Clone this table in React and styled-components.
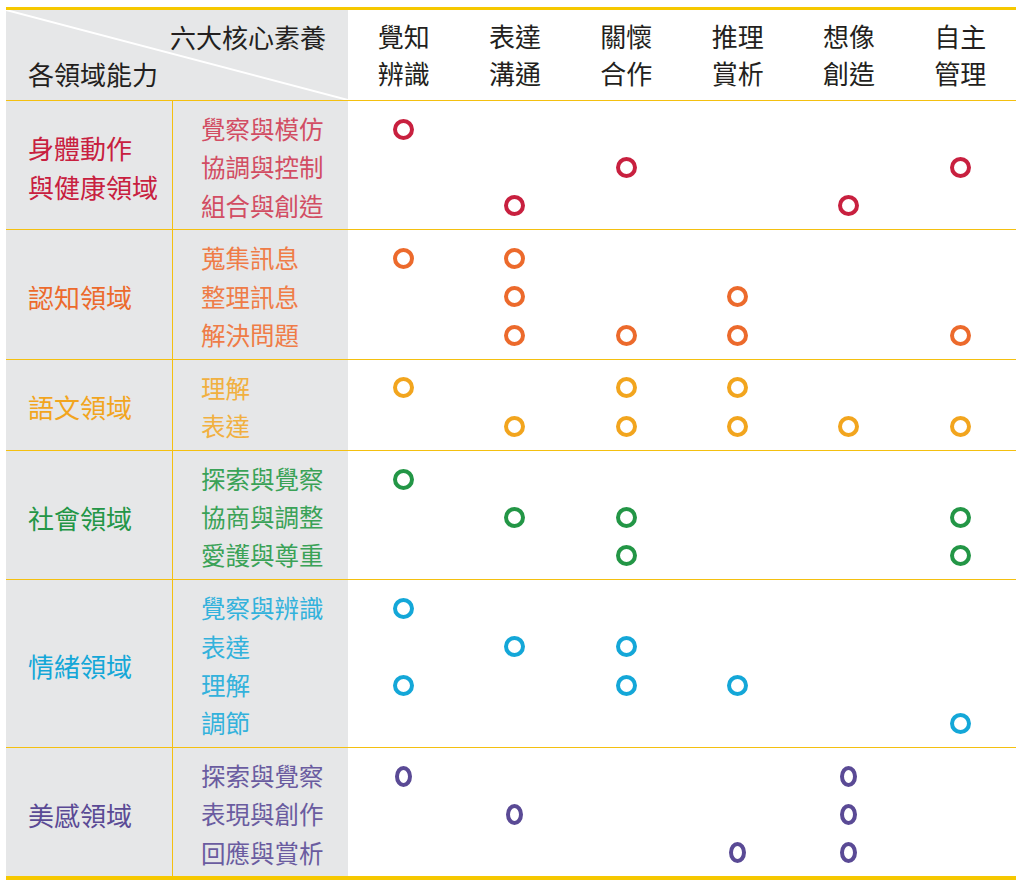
import styled, { createGlobalStyle } from 'styled-components';

const GlobalStyle = createGlobalStyle`
  body {
    margin: 0;
    background: #ffffff;
    font-family: "Noto Sans CJK TC", "Noto Sans", sans-serif;
  }
`;

const GRAY = '#e6e7e8';
const LINE = '#f4c010';
const THICK = '#f6c800';
const LINE_H = 38.3;

const domains = [
  {
    name: ['身體動作', '與健康領域'],
    color: '#c8203f',
    soft: '#d24d63',
    skills: [
      ['覺察與模仿', [1]],
      ['協調與控制', [3, 6]],
      ['組合與創造', [2, 5]],
    ],
  },
  {
    name: ['認知領域'],
    color: '#ec6a2c',
    soft: '#ef7c47',
    skills: [
      ['蒐集訊息', [1, 2]],
      ['整理訊息', [2, 4]],
      ['解決問題', [2, 3, 4, 6]],
    ],
  },
  {
    name: ['語文領域'],
    color: '#f2a51e',
    soft: '#f1b040',
    skills: [
      ['理解', [1, 3, 4]],
      ['表達', [2, 3, 4, 5, 6]],
    ],
  },
  {
    name: ['社會領域'],
    color: '#239646',
    soft: '#3aa257',
    skills: [
      ['探索與覺察', [1]],
      ['協商與調整', [2, 3, 6]],
      ['愛護與尊重', [3, 6]],
    ],
  },
  {
    name: ['情緒領域'],
    color: '#14a7d8',
    soft: '#33b2dc',
    skills: [
      ['覺察與辨識', [1]],
      ['表達', [2, 3]],
      ['理解', [1, 3, 4]],
      ['調節', [6]],
    ],
  },
  {
    name: ['美感領域'],
    color: '#5a4a95',
    soft: '#6a5ca0',
    oval: true,
    skills: [
      ['探索與覺察', [1, 5]],
      ['表現與創作', [2, 5]],
      ['回應與賞析', [4, 5]],
    ],
  },
];

const competencies = [
  ['覺知', '辨識'],
  ['表達', '溝通'],
  ['關懷', '合作'],
  ['推理', '賞析'],
  ['想像', '創造'],
  ['自主', '管理'],
];

const Table = styled.div`
  margin: 7px 0 0 6px;
  width: 1010px;
  border-top: 3px solid ${THICK};
`;

const HeaderRow = styled.div`
  display: flex;
  height: 90px;
  border-bottom: 1px solid ${LINE};
`;

const Corner = styled.div`
  position: relative;
  width: 342px;
  flex-shrink: 0;
  background: ${GRAY};
  display: flex;
  flex-direction: column;
  justify-content: center;
  font-size: 26px;
  line-height: 37px;
  color: #231f20;
`;

const Diagonal = styled.svg`
  position: absolute;
  inset: 0;
  width: 100%;
  height: 100%;
`;

const CornerTop = styled.div`
  position: relative;
  text-align: right;
  padding-right: 22px;
`;

const CornerBottom = styled.div`
  position: relative;
  padding-left: 22px;
`;

const HeadCell = styled.div`
  flex: 1;
  display: flex;
  flex-direction: column;
  justify-content: center;
  align-items: center;
  padding-bottom: 2px;
  font-size: 26px;
  line-height: 37px;
  color: #231f20;
`;

const Group = styled.div`
  display: flex;
  border-bottom: ${p => (p.$last ? `4px solid ${THICK}` : `1px solid ${LINE}`)};
`;

const DomainCell = styled.div`
  width: 167px;
  flex-shrink: 0;
  box-sizing: border-box;
  background: ${GRAY};
  border-right: 1px solid ${LINE};
  padding: 4px 0 0 22px;
  display: flex;
  flex-direction: column;
  justify-content: center;
  font-size: 26px;
  line-height: 39px;
  color: ${p => p.$color};
`;

const SkillList = styled.div`
  width: 175px;
  flex-shrink: 0;
  box-sizing: border-box;
  background: ${GRAY};
  padding: 9px 0 4.5px 28px;
  font-size: 24.5px;
  line-height: ${LINE_H}px;
  color: ${p => p.$color};
`;

const Marks = styled.div`
  flex: 1;
  padding: 9px 0 4.5px;
  display: grid;
  grid-template-columns: repeat(6, 1fr);
  grid-auto-rows: ${LINE_H}px;
`;

const Slot = styled.div`
  display: flex;
  align-items: center;
  justify-content: center;
`;

const Ring = styled.span`
  box-sizing: border-box;
  width: ${p => (p.$oval ? 17 : 21)}px;
  height: 21px;
  border-radius: 50%;
  border: 4px solid ${p => p.$color};
`;

export default function App() {
  return (
    <>
      <GlobalStyle />
      <Table>
        <HeaderRow>
          <Corner>
            <Diagonal viewBox="0 0 342 90" preserveAspectRatio="none">
              <line x1="0" y1="0" x2="342" y2="90" stroke="#ffffff" strokeWidth="2" />
            </Diagonal>
            <CornerTop>六大核心素養</CornerTop>
            <CornerBottom>各領域能力</CornerBottom>
          </Corner>
          {competencies.map(([a, b]) => (
            <HeadCell key={a}>
              <span>{a}</span>
              <span>{b}</span>
            </HeadCell>
          ))}
        </HeaderRow>

        {domains.map((d, gi) => (
          <Group key={d.name.join('')} $last={gi === domains.length - 1}>
            <DomainCell $color={d.color}>
              {d.name.map(line => (
                <span key={line}>{line}</span>
              ))}
            </DomainCell>
            <SkillList $color={d.soft}>
              {d.skills.map(([skill], i) => (
                <div key={i}>{skill}</div>
              ))}
            </SkillList>
            <Marks>
              {d.skills.map(([skill, cols], row) =>
                [1, 2, 3, 4, 5, 6].map(c => (
                  <Slot key={`${row}-${c}`}>
                    {cols.includes(c) && <Ring $color={d.color} $oval={d.oval} />}
                  </Slot>
                ))
              )}
            </Marks>
          </Group>
        ))}
      </Table>
    </>
  );
}
